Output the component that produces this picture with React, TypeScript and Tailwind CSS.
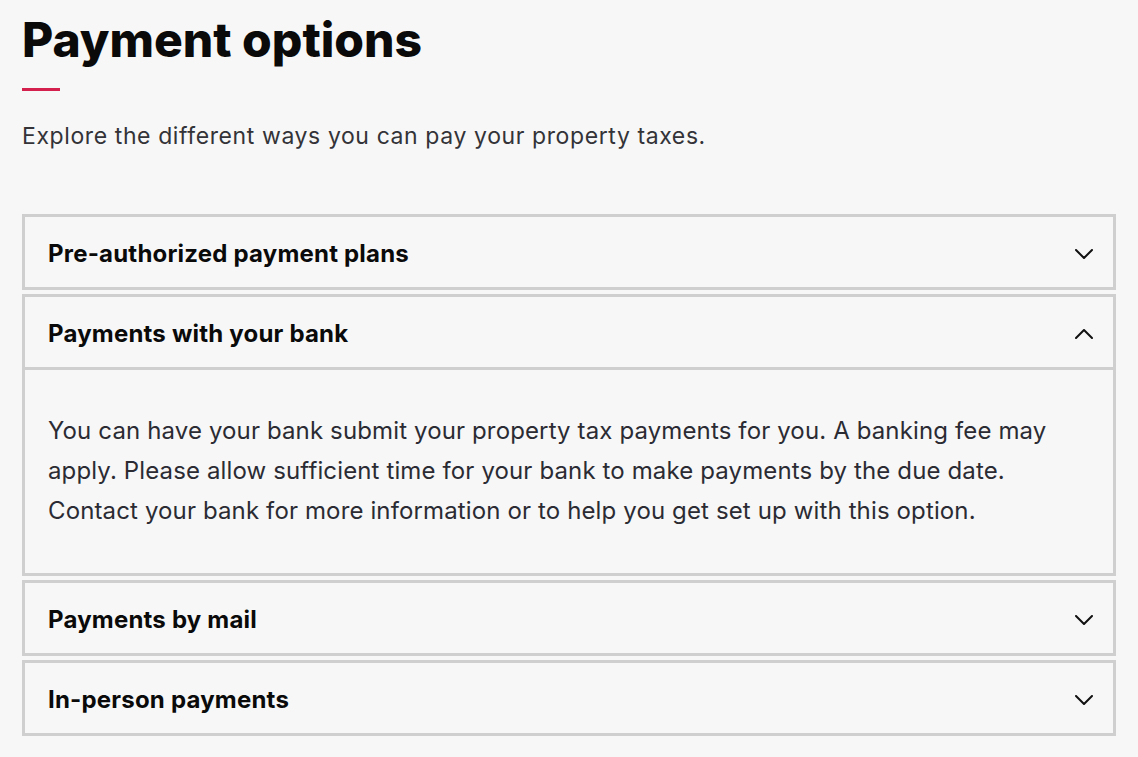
import { useState } from "react";

interface Section {
    title: string;
    body?: string;
}

const sections: Section[] = [
    { title: "Pre-authorized payment plans" },
    {
        title: "Payments with your bank",
        body: "You can have your bank submit your property tax payments for you. A banking fee may apply. Please allow sufficient time for your bank to make payments by the due date. Contact your bank for more information or to help you get set up with this option.",
    },
    { title: "Payments by mail" },
    { title: "In-person payments" },
];

function Chevron({ up }: { up: boolean }) {
    return (
        <svg width="18" height="10" viewBox="0 0 18 10" fill="none" className={up ? "rotate-180" : ""}>
            <path d="M1 1l8 8 8-8" stroke="#111" strokeWidth="2" strokeLinecap="round" strokeLinejoin="round" />
        </svg>
    );
}

export default function App() {
    const [open, setOpen] = useState<number | null>(1);

    return (
        <div className="min-h-[757px] bg-[#f7f7f7] px-[22px] pt-[11px] font-['Inter',sans-serif]">
            <h1 className="text-[48px] leading-[58px] font-extrabold tracking-[0px] text-[#0a0a0a]">
                Payment options
            </h1>
            <div className="mt-[19px] h-[3px] w-[38px] bg-[#d3204c]" />
            <p className="mt-[29px] text-[23px] leading-[33px] tracking-[0.6px] text-[#333338]">
                Explore the different ways you can pay your property taxes.
            </p>

            <div className="mt-[61px] flex flex-col gap-[4px]">
                {sections.map((s, i) => {
                    const isOpen = open === i;
                    return (
                        <div key={s.title} className="border-[3px] border-[#cfcfcf]">
                            <button
                                onClick={() => setOpen(isOpen ? null : i)}
                                className="flex h-[70px] w-full items-center justify-between pl-[23px] pr-[20px] pt-[4px] text-left">
                                <span className="text-[24px] font-bold tracking-[0.2px] text-[#0a0a0a]">
                                    {s.title}
                                </span>
                                <Chevron up={isOpen} />
                            </button>
                            {isOpen && s.body && (
                                <div className="border-t-[3px] border-[#cfcfcf] pl-[23px] pr-[40px] pt-[41px] pb-[42px]">
                                    <p className="text-[24px] leading-[40px] tracking-[0.13px] text-[#2b2b33]">
                                        {s.body}
                                    </p>
                                </div>
                            )}
                        </div>
                    );
                })}
            </div>
        </div>
    );
}
